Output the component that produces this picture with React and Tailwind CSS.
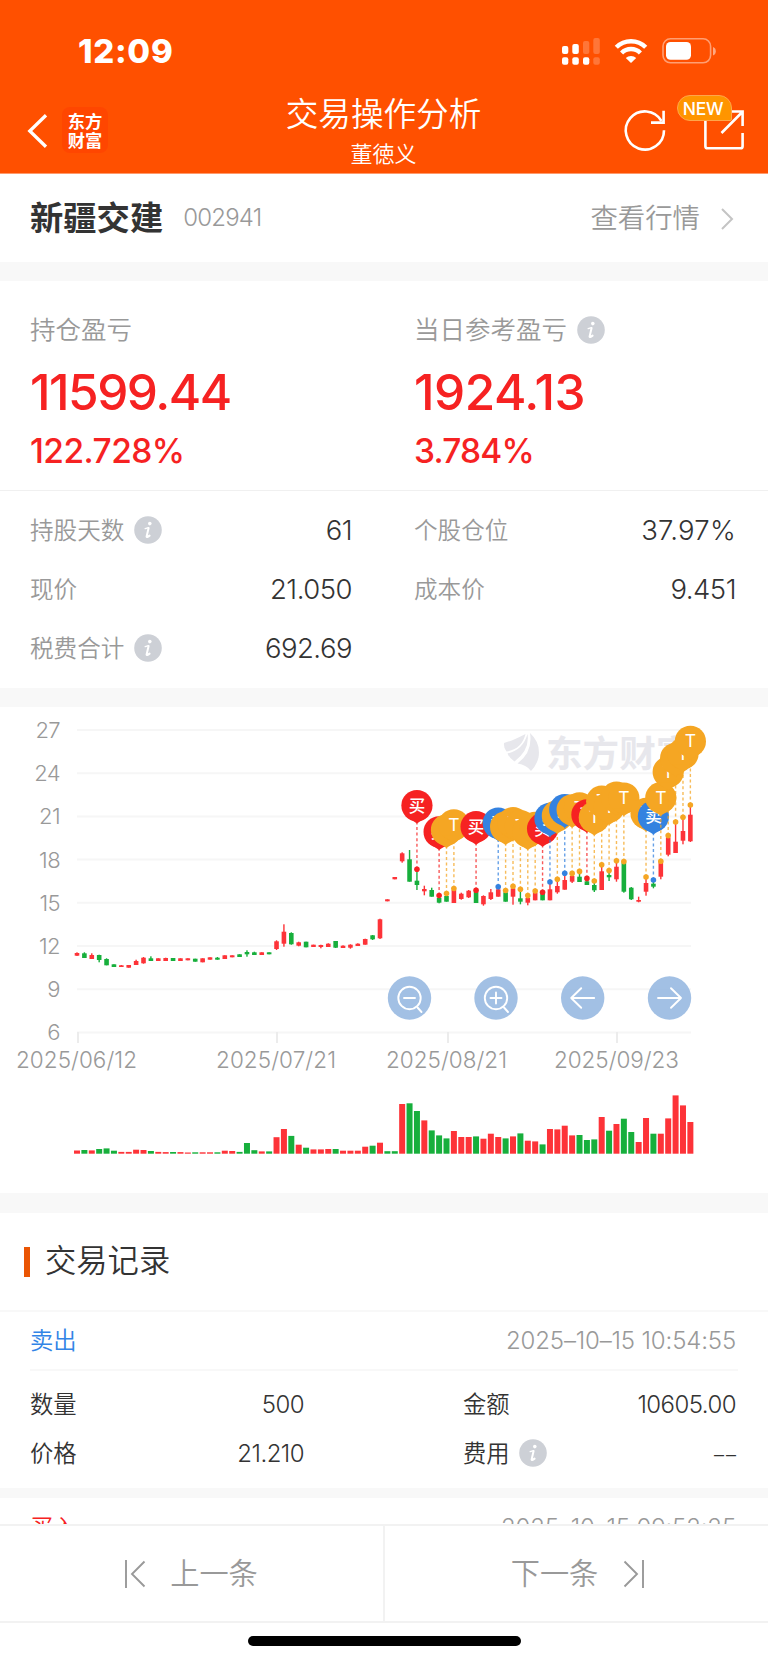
import React from 'react';

const RED = '#fd3338';
const GREEN = '#17af3c';

const PIN_COLORS = { b: '#f62222', s: '#3482e0', t: '#f5a623' };
const PIN_LABELS = { b: '买', s: '卖', t: 'T' };

// candle step and first candle centre on the x axis
const STEP = 7.39;
const X0 = 77;
const BASELINE = 1153.7;

// [direction, high, bodyTop, bodyBottom, low, volume]
const CANDLES = [
  ['u', 952.3, 953, 955.7, 956, 3.2], ['d', 952.3, 953.3, 958, 958, 3.7], ['u', 953.3, 955, 959, 959, 3.3],
  ['d', 954.7, 955, 960, 962.3, 4.7], ['d', 958.3, 959, 965.3, 965.3, 5.3], ['d', 964.3, 964.3, 967, 967, 3],
  ['u', 965, 965.3, 967, 967, 1.8], ['u', 965, 965, 967.7, 967.7, 1.8], ['u', 959.7, 961, 965, 965, 4],
  ['u', 957, 957.7, 963.3, 963.7, 3.7], ['d', 956.3, 958.3, 961, 961, 2.7], ['u', 958.3, 958.3, 961, 961, 1.8],
  ['u', 957.7, 958, 961, 961, 1.6], ['d', 958, 958, 961, 961, 1.7], ['u', 958.3, 958.3, 961, 961, 1.6],
  ['u', 958.3, 958.3, 960.3, 960.3, 1.2], ['d', 958.7, 958.7, 961.7, 961.7, 1.4], ['u', 958.3, 958.3, 962.3, 962.3, 1.4],
  ['u', 957.3, 957.3, 959.7, 959.7, 1.4], ['d', 957, 957.7, 959.7, 959.7, 1.4], ['u', 955.3, 955.3, 959, 959, 3],
  ['u', 955.3, 955.3, 957.3, 957.3, 2.7], ['d', 954.3, 954.3, 957, 957, 1.8], ['d', 950.3, 952, 954.3, 956.7, 10.7],
  ['d', 951.7, 952.3, 955, 955, 3.5], ['u', 952.3, 952.3, 955, 955, 2.3], ['d', 952.3, 952.3, 954.3, 954.3, 2.3],
  ['u', 940.3, 941.3, 949, 950, 16.5], ['u', 924.3, 931.7, 943.7, 946.7, 24.7], ['d', 932.3, 933, 944.3, 944.7, 17.8],
  ['u', 941.7, 942.3, 945.7, 946.3, 9], ['d', 941.7, 941.7, 947.3, 947.3, 6], ['u', 944.7, 944.7, 947, 947, 4.3],
  ['u', 944.7, 945, 947, 948.3, 4.3], ['u', 943.3, 943.7, 947, 947, 4.7], ['d', 941, 941, 947.7, 948, 4.7],
  ['u', 945.3, 945.7, 948, 948, 3], ['u', 944.3, 944.7, 947.7, 948.7, 3], ['u', 943.3, 943.7, 946, 946, 3],
  ['u', 938.7, 939, 944.7, 944.7, 7], ['d', 935, 935.3, 939.3, 940, 8], ['u', 918.7, 919.3, 938.3, 939, 11],
  ['u', 899.3, 899.3, 901.3, 901.3, 2.5, 'd'], ['u', 877, 877, 879.3, 879.3, 2.5, 'd'], ['u', 852.3, 853.3, 861.3, 862.7, 49.7],
  ['d', 850, 859.3, 881.7, 881.7, 50.4], ['d', 869.3, 880.7, 885, 890, 42.7], ['u', 885.7, 889, 891.3, 895.3, 33.3],
  ['d', 887.7, 890, 896.7, 896.7, 23.3], ['d', 896.7, 898, 902.7, 903.3, 18.3], ['d', 895, 896, 901.7, 901.7, 15.3],
  ['u', 889.3, 890, 903, 903, 22.7], ['u', 892.7, 893.7, 899, 899.7, 16.7], ['u', 890, 890.7, 897.3, 898, 16.7],
  ['d', 890.7, 891.7, 903, 903, 17.3], ['u', 895.3, 896, 904.3, 905.7, 15], ['u', 889, 892.3, 899, 900, 20],
  ['u', 888.3, 889.3, 896.7, 896.7, 16.7], ['d', 891.7, 892.3, 901.7, 901.7, 15.3], ['u', 887.3, 888.3, 896.7, 904.7, 17.3],
  ['d', 890.7, 898.3, 901.7, 904.3, 20.3], ['u', 896.7, 898, 902.7, 905.3, 13], ['u', 891.7, 892.7, 900.3, 900.3, 12.3],
  ['d', 892.7, 893.3, 900.3, 900.3, 9.3], ['u', 883.3, 889.3, 900.3, 900.3, 24.7], ['u', 880, 886, 892.3, 893.7, 24.3],
  ['u', 874.3, 880, 889.7, 889.7, 28], ['u', 873.3, 876, 881.7, 883, 18.3], ['d', 871.7, 876.7, 882, 882, 18.7],
  ['d', 880, 881.3, 885, 885, 13.7], ['d', 881.7, 885, 890.3, 892, 14.3], ['u', 865.7, 871.3, 890, 890, 36.7],
  ['d', 871, 875, 877.3, 881, 23], ['u', 861, 866.7, 879.3, 881.7, 29.7], ['d', 861.7, 862.3, 891.7, 892.7, 35],
  ['d', 887, 887.7, 899.3, 900, 21.7], ['u', 896.7, 900, 901.7, 902.3, 11.7], ['u', 877.7, 883, 891.7, 895.7, 35.7],
  ['d', 880, 883.7, 886.7, 888.3, 20], ['u', 861.7, 862.3, 876.7, 879.3, 20], ['u', 835.7, 837.3, 854.7, 856.3, 35.3],
  ['u', 822.7, 841.7, 853, 853, 58.3], ['u', 817.3, 831, 840.7, 844.3, 48.3], ['u', 805, 814.7, 841.3, 842, 31.7],
];

// [candle index, kind, y of the traded price]
const PINS = [
  [46, 'b', 869.2], [49, 'b', 895.5], [50, 't', 893.5], [51, 't', 888.5], [54, 'b', 890.3], [57, 's', 886.7],
  [58, 't', 890.5], [59, 't', 886.3], [60, 't', 889.3], [61, 't', 895.6], [62, 't', 891], [63, 'b', 892.3],
  [64, 's', 882], [65, 't', 879.3], [66, 's', 873.3], [67, 't', 873.4], [68, 't', 871.4], [69, 'b', 878.4],
  [70, 't', 881], [71, 't', 864.8], [72, 't', 870.6], [73, 't', 860.8], [74, 't', 861.6], [77, 't', 877],
  [78, 's', 880], [79, 't', 861.3], [80, 't', 835.6], [81, 't', 822], [82, 't', 817.3], [83, 't', 805],
];

const PRICES = [27, 24, 21, 18, 15, 12, 9, 6];
const DATES = [
  { tick: 78, x: 16, w: 121, label: '2025/06/12' },
  { tick: 277, x: 216, w: 120, label: '2025/07/21' },
  { tick: 448, x: 386, w: 121, label: '2025/08/21' },
  { tick: 617, x: 554, w: 125, label: '2025/09/23' },
];

function InfoIcon() {
  return (
    <svg className="w-[28px] h-[28px] shrink-0 -mt-px" viewBox="0 0 28 28">
      <circle cx="14" cy="14" r="13.8" fill="#cdd0d6" />
      <circle cx="15.8" cy="7.6" r="1.8" fill="#fff" />
      <path d="M11.2 12.6 L14.4 11.6" fill="none" stroke="#fff" strokeWidth="1.4" strokeLinecap="round" />
      <path d="M14.6 12 L12.6 20.4 Q12.6 22 15.6 19.6" fill="none" stroke="#fff" strokeWidth="2" strokeLinejoin="round" strokeLinecap="round" />
    </svg>
  );
}

function StatusBar() {
  return (
    <div className="h-[88px] flex items-start justify-between pl-[78px] pr-[52px]">
      <div className="h-[103px] flex items-center text-[33px] font-extrabold tracking-[0.7px] leading-none">12:09</div>
      <svg className="w-[156px] h-[30px] mt-[36px]" viewBox="560 36 156 30" fill="#fff">
        <rect x="562" y="46" width="6.3" height="8" rx="2" />
        <rect x="572.3" y="44" width="6.5" height="10" rx="2" />
        <rect x="583" y="41" width="6.3" height="13" rx="2" opacity=".22" />
        <rect x="593.3" y="38" width="6.5" height="16" rx="2" opacity=".22" />
        <rect x="562" y="57.3" width="6.3" height="7.4" rx="2" />
        <rect x="572.3" y="57.3" width="6.5" height="7.4" rx="2" />
        <rect x="583" y="57.3" width="6.3" height="7.4" rx="2" />
        <rect x="593.3" y="57.3" width="6.5" height="7.4" rx="2" opacity=".22" />
        <g fill="none" stroke="#fff" strokeWidth="4.4">
          <path d="M616.3 47.3 A20.8 20.8 0 0 1 645.7 47.3" />
          <path d="M621.6 53 A13.2 13.2 0 0 1 640.4 53" />
        </g>
        <path d="M625.8 58 A7.5 7.5 0 0 1 636.2 58 L631 63 Z" />
        <rect x="663" y="38.8" width="47.6" height="24" rx="7.5" fill="none" stroke="#fff" strokeWidth="1.6" opacity=".45" />
        <rect x="666" y="42" width="25" height="17.8" rx="4.5" />
        <path d="M713 47 Q715.8 48 715.8 51.3 Q715.8 54.6 713 55.4 Z" opacity=".5" />
      </svg>
    </div>
  );
}

function TitleBar() {
  return (
    <div className="h-[85px] grid grid-cols-[1fr_220px_1fr]">
      <div className="flex items-start pl-[26px]">
        <svg className="w-[24px] h-[38px] mt-[24px]" viewBox="26 112 24 38">
          <path d="M46 115.3 L29.8 131 L46 146.7" fill="none" stroke="#fff" strokeWidth="3.3" />
        </svg>
        <div className="w-[46px] h-[46px] ml-[12px] mt-[19px] rounded-[8px] bg-[#ff4600] flex flex-col items-center justify-center text-[17.3px] leading-[19px] font-bold font-['Noto_Sans_CJK_SC']">
          <span>东方</span>
          <span>财富</span>
        </div>
      </div>
      <div className="flex flex-col items-center text-center">
        <h1 className="h-[53px] flex items-center text-[32.6px] leading-none font-[350] whitespace-nowrap pr-px">交易操作分析</h1>
        <div className="h-[25px] flex items-center text-[22px] leading-none font-[350] pr-px">董徳义</div>
      </div>
      <div className="relative flex justify-end pr-[22px] pt-[18px]">
        <svg className="w-[124px] h-[48px]" viewBox="622 106 124 48" fill="none" stroke="#fff" strokeWidth="2.6">
          <path d="M664 130.3 A19.1 19.1 0 1 1 661.5 121" />
          <path d="M663.6 110.8 V122.6 H651" />
          <path d="M705.4 118 V146.2 Q705.4 148.3 707.5 148.3 H740.6 Q742.6 148.3 742.6 146.2 V133" />
          <path d="M732 111.5 H742.6 V126 M742.3 112 L721.5 133" />
        </svg>
        <span className="absolute right-[36px] top-[7px] w-[55px] h-[26px] rounded-[13px] rounded-br-[2px] bg-[#ff9500] border border-[#ffa64a] flex items-center justify-center pr-[3px] pt-px text-[17.5px] tracking-[-0.3px] leading-none font-medium">
          NEW
        </span>
      </div>
    </div>
  );
}

function Stat({ label, value, info, wide }) {
  return (
    <div className="h-[59px] flex items-center justify-between">
      <div className="flex items-center gap-[10px] text-[23.6px] text-[#999]">
        <span className="font-[350]">{label}</span>
        {info && <InfoIcon />}
      </div>
      <span className={`text-[27.5px] font-[350] text-[#333] ${wide ? 'tracking-[0.25px]' : 'tracking-[-0.5px]'}`}>{value}</span>
    </div>
  );
}

function Pin({ index, kind, y }) {
  const x = X0 + index * STEP;
  const cy = y - 63.6;
  const color = PIN_COLORS[kind];
  return (
    <g>
      <line x1={x} y1={y} x2={x} y2={cy + 17} stroke={color} strokeWidth="1.4" strokeDasharray="3 2.6" opacity=".75" />
      <circle cx={x} cy={y} r="2.8" fill={color} />
      <circle cx={x} cy={cy} r="15.6" fill={color} />
      <path d={`M${x - 11.5} ${cy + 10.5} Q${x - 4} ${cy + 15.5} ${x} ${cy + 18} Q${x + 4} ${cy + 15.5} ${x + 11.5} ${cy + 10.5} Z`} fill={color} />
      <text x={x} y={cy + 6} textAnchor="middle" fontSize={kind === 't' ? 17.5 : 16.5} fill="#fff" fontWeight={kind === 't' ? 400 : 500}>
        {PIN_LABELS[kind]}
      </text>
    </g>
  );
}

function ChartButton({ x, children }) {
  return (
    <g transform={`translate(${x} 998)`}>
      <circle r="21.7" fill="#98b9e1" opacity=".9" />
      <g fill="none" stroke="#fff" strokeWidth="1.9" strokeLinecap="round" strokeLinejoin="round">{children}</g>
    </g>
  );
}

function Chart() {
  return (
    <svg className="block w-[768px] h-[486px]" viewBox="0 707 768 486">
      {/* Watermark */}
      <g fill="#e7e7ec">
        <path d="M504 743 Q512 741 525.5 734 Q522 749 506.5 751.5 Q503.5 748 504 743 Z" />
        <path d="M527.5 734 Q530 750 514.5 761.5 Q509.5 758.5 507.5 753.5 Q523 750 527.5 734 Z" />
        <path d="M530 733 Q541 743 538.5 757.5 Q536.5 765.5 531 771 Q527 765 517.5 763.5 Q533 752 530 733 Z" />
        <text x="546" y="766.5" fontSize="36.6" fontWeight="700">东方财富</text>
      </g>

      {/* Grid */}
      {PRICES.map((p, i) => (
        <g key={p}>
          <line x1="77" x2="691" y1={730 + i * 43.2} y2={730 + i * 43.2} stroke="#f6f6f6" strokeWidth="2" />
          <text x="60" y={738 + i * 43.2} textAnchor="end" fontSize="22" letterSpacing="-0.6" fontWeight="350" fill="#999">{p}</text>
        </g>
      ))}
      {DATES.map(d => (
        <g key={d.label}>
          <line x1={d.tick} x2={d.tick} y1="1032" y2="1043" stroke="#ececec" strokeWidth="2" />
          <text x={d.x} y="1068.4" textLength={d.w} fontSize="22.5" fontWeight="350" fill="#999">{d.label}</text>
        </g>
      ))}

      {/* Candles and volume */}
      {CANDLES.map(([dir, high, top, bottom, low, volume, volDir], i) => {
        const x = X0 + i * STEP;
        const color = dir === 'u' ? RED : GREEN;
        return (
          <g key={i}>
            <rect x={x - 0.7} y={high} width="1.4" height={low - high} fill={color} />
            <rect x={x - 2.3} y={top} width="4.6" height={bottom - top} fill={color} />
            <rect x={x - 3} y={BASELINE - volume} width="6" height={volume} fill={volDir === 'd' ? GREEN : color} />
          </g>
        );
      })}

      {PINS.map(([index, kind, y]) => <Pin key={index} index={index} kind={kind} y={y} />)}

      {/* Zoom and pan */}
      <ChartButton x={409.5}>
        <circle r="11.2" />
        <path d="M-5.5 0 H5.5 M8 9.5 L12 14" />
      </ChartButton>
      <ChartButton x={496}>
        <circle r="11.2" />
        <path d="M-5.5 0 H5.5 M0 -5.5 V5.5 M8 9.5 L12 14" />
      </ChartButton>
      <ChartButton x={582.7}>
        <path d="M11.5 0 H-11.5 M-1.5 -9.8 L-11.5 0 L-1.5 9.8" />
      </ChartButton>
      <ChartButton x={669.5}>
        <path d="M-11.5 0 H11.5 M1.5 -9.8 L11.5 0 L1.5 9.8" />
      </ChartButton>
    </svg>
  );
}

function RecordCell({ label, value, info }) {
  return (
    <div className="h-[49px] flex items-center justify-between text-[#333] font-[350]">
      <div className="flex items-center gap-[9px] text-[23.3px]">
        <span>{label}</span>
        {info && <InfoIcon />}
      </div>
      {value ? (
        <span className="text-[24px] tracking-[-0.55px]">{value}</span>
      ) : (
        <span className="flex gap-[2px] pt-[2px] text-[20px]"><span>–</span><span>–</span></span>
      )}
    </div>
  );
}

export default function App() {
  return (
    <div className="w-[768px] h-[1663px] overflow-hidden flex flex-col bg-white leading-none font-['Inter','Noto_Sans_CJK_SC',sans-serif]">
      <header className="h-[174px] shrink-0 bg-[#ff5000] border-b border-[#ff9a6c] text-white">
        <StatusBar />
        <TitleBar />
      </header>

      <main className="h-[1350px] shrink-0 overflow-hidden">
        {/* Stock */}
        <div className="h-[88px] flex items-center justify-between pl-[30px] pr-[34px] pt-px">
          <div className="flex items-center">
            <h2 className="text-[33.3px] font-bold text-[#333]">新疆交建</h2>
            <span className="ml-[20px] text-[24px] font-[350] tracking-[-0.8px] text-[#999]">002941</span>
          </div>
          <div className="flex items-center text-[27.4px] font-[350] text-[#999]">
            <span>查看行情</span>
            <svg className="w-[14px] h-[24px] ml-[20px]" viewBox="0 0 14 24">
              <path d="M2 2 L12 12 L2 22" fill="none" stroke="#c4c4c4" strokeWidth="2" />
            </svg>
          </div>
        </div>
        <div className="h-[19px] bg-[#f8f8f8]" />

        {/* Profit and loss */}
        <div className="h-[210px] grid grid-cols-[384px_384px] text-[#f62222] border-b border-[#f0f0f0]">
          <div className="pl-[30px] pt-[32px]">
            <div className="h-[34px] flex items-center text-[25.5px] font-[350] text-[#999]">持仓盈亏</div>
            <div className="h-[92px] flex items-center text-[49.5px] font-medium tracking-[-1.5px]">11599.44</div>
            <div className="h-[26px] flex items-center text-[33.5px] font-medium tracking-[-0.55px]">122.728%</div>
          </div>
          <div className="pl-[30px] pt-[32px]">
            <div className="h-[34px] flex items-center gap-[10px] text-[25.5px] font-[350] text-[#999]">
              当日参考盈亏
              <InfoIcon />
            </div>
            <div className="h-[92px] flex items-center text-[49.5px] font-medium tracking-[-0.5px]">1924.13</div>
            <div className="h-[26px] flex items-center text-[33.5px] font-medium tracking-[-0.8px]">3.784%</div>
          </div>
        </div>
        <div className="h-[197px] grid grid-cols-2 content-start gap-x-[62px] pl-[30px] pr-[32px] pt-[10px]">
          <Stat label="持股天数" value="61" info />
          <Stat label="个股仓位" value="37.97%" wide />
          <Stat label="现价" value="21.050" />
          <Stat label="成本价" value="9.451" />
          <Stat label="税费合计" value="692.69" info />
        </div>
        <div className="h-[19px] bg-[#f8f8f8]" />

        <Chart />
        <div className="h-[20px] bg-[#f8f8f8]" />

        {/* Trade records */}
        <div className="h-[99px] flex items-center gap-[15px] pl-[24px] border-b-2 border-[#f8f8f8]">
          <span className="w-[6px] h-[30px] bg-[#ea5504]" />
          <h3 className="text-[31.3px] font-[350] text-[#333]">交易记录</h3>
        </div>
        <div className="h-[59px] mx-[30px] pr-[2px] flex items-center justify-between border-b-2 border-[#f8f8f8]">
          <span className="text-[23.3px] font-[350] text-[#3284e6]">卖出</span>
          <span className="text-[24px] font-[350] tracking-[-0.15px] text-[#999]">2025–10–15 10:54:55</span>
        </div>
        <div className="h-[117px] grid grid-cols-[274px_273px] content-start gap-x-[159px] pl-[30px] pt-[9px]">
          <RecordCell label="数量" value="500" />
          <RecordCell label="金额" value="10605.00" />
          <RecordCell label="价格" value="21.210" />
          <RecordCell label="费用" info />
        </div>
        <div className="h-[10px] bg-[#f8f8f8]" />
        <div className="h-[59px] mx-[30px] pr-[2px] flex items-center justify-between">
          <span className="text-[23.3px] font-[350] text-[#f62222]">买入</span>
          <span className="text-[24px] font-[350] tracking-[-0.15px] text-[#999]">2025–10–15 09:52:25</span>
        </div>
      </main>

      <nav className="h-[99px] shrink-0 grid grid-cols-[385px_383px] bg-white border-y-2 border-[#f2f2f2] text-[29.2px] font-[350] text-[#999]">
        <button className="flex items-center justify-center gap-[24px] border-r-2 border-[#f2f2f2] pr-px pt-px">
          <svg className="w-[22px] h-[30px]" viewBox="0 0 22 30" fill="none" stroke="#999" strokeWidth="1.9">
            <path d="M2 1 V29 M20.5 2.5 L8 15 L20.5 27.5" />
          </svg>
          上一条
        </button>
        <button className="flex items-center justify-center gap-[25px] pl-[3px] pt-px">
          下一条
          <svg className="w-[22px] h-[30px]" viewBox="0 0 22 30" fill="none" stroke="#999" strokeWidth="1.9">
            <path d="M20 1 V29 M1.5 2.5 L14 15 L1.5 27.5" />
          </svg>
        </button>
      </nav>
      <div className="h-[40px] shrink-0 flex justify-center pt-[13px]">
        <div className="w-[273px] h-[10px] rounded-full bg-black" />
      </div>
    </div>
  );
}
